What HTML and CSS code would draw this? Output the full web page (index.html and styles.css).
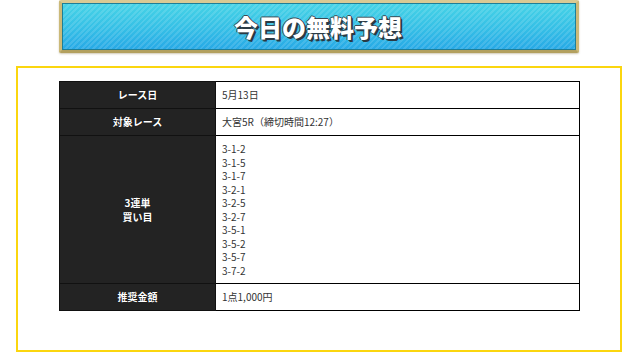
FILE: index.html
```html
<!DOCTYPE html>
<html lang="ja">
<head>
<meta charset="utf-8">
<title>今日の無料予想</title>
<link rel="stylesheet" href="styles.css">
</head>
<body>
<div class="banner">
  <div class="banner-inner">
    <h2 class="banner-title">今日の無料予想</h2>
  </div>
</div>
<div class="box">
  <table class="yoso">
    <tr>
      <th>レース日</th>
      <td>5月13日</td>
    </tr>
    <tr>
      <th>対象レース</th>
      <td>大宮5R（締切時間12:27）</td>
    </tr>
    <tr>
      <th>3連単<br>買い目</th>
      <td class="list">3-1-2<br>3-1-5<br>3-1-7<br>3-2-1<br>3-2-5<br>3-2-7<br>3-5-1<br>3-5-2<br>3-5-7<br>3-7-2</td>
    </tr>
    <tr>
      <th>推奨金額</th>
      <td>1点1,000円</td>
    </tr>
  </table>
</div>
</body>
</html>
```
FILE: styles.css
```css
html, body {
  margin: 0;
  padding: 0;
  background: #ffffff;
}
body {
  font-family: "Noto Sans CJK JP", "Noto Sans", sans-serif;
  color: #222;
}
.banner {
  width: 520px;
  height: 53px;
  margin: 0 0 0 59px;
  box-sizing: border-box;
  border: 3px solid #cbb978;
  border-top-color: #d9ca94;
  border-bottom-color: #b3a05e;
  border-radius: 2px;
  box-shadow: 0 1px 2px rgba(120, 100, 40, 0.35);
}
.banner-inner {
  height: 100%;
  box-sizing: border-box;
  border: 1px solid #1d7e98;
  background:
    repeating-linear-gradient(135deg, rgba(255,255,255,0.12) 0 2px, rgba(255,255,255,0) 2px 4px),
    linear-gradient(to bottom, #46d3e6 0%, #35bfe6 55%, #27a9e6 100%);
  display: flex;
  align-items: center;
  justify-content: center;
}
.banner-title {
  margin: 0;
  font-size: 24px;
  line-height: 28px;
  font-weight: 900;
  color: #ffffff;
  letter-spacing: 0;
  text-shadow: 1px 1px 0 #2a3a44, 2px 2px 0 #2a3a44, -1px 0 0 #3a4a54, 0 -1px 0 #3a4a54, 1px 0 0 #2a3a44;
  padding-right: 2px;
}
.box {
  margin: 13px 0 0 16px;
  width: 606px;
  box-sizing: border-box;
  border: 2px solid #fbd60f;
  padding: 13px 40px 39px 41px;
}
.yoso {
  width: 521px;
  border-collapse: collapse;
  font-size: 10px;
  line-height: 14px;
}
.yoso th {
  width: 156px;
  box-sizing: border-box;
  background: #232323;
  color: #ffffff;
  font-weight: bold;
  text-align: center;
  padding: 6px 6px;
  border: 1px solid #111;
  border-top: 1px solid #4a4a4a;
  text-shadow: 0 0 1px #000;
}
.yoso tr:first-child th {
  border-top-color: #111;
}
.yoso td {
  background: #ffffff;
  color: #333;
  padding: 6px 6px;
  border: 1px solid #000;
  text-align: left;
}
.yoso td.list {
  line-height: 13.5px;
}
```
